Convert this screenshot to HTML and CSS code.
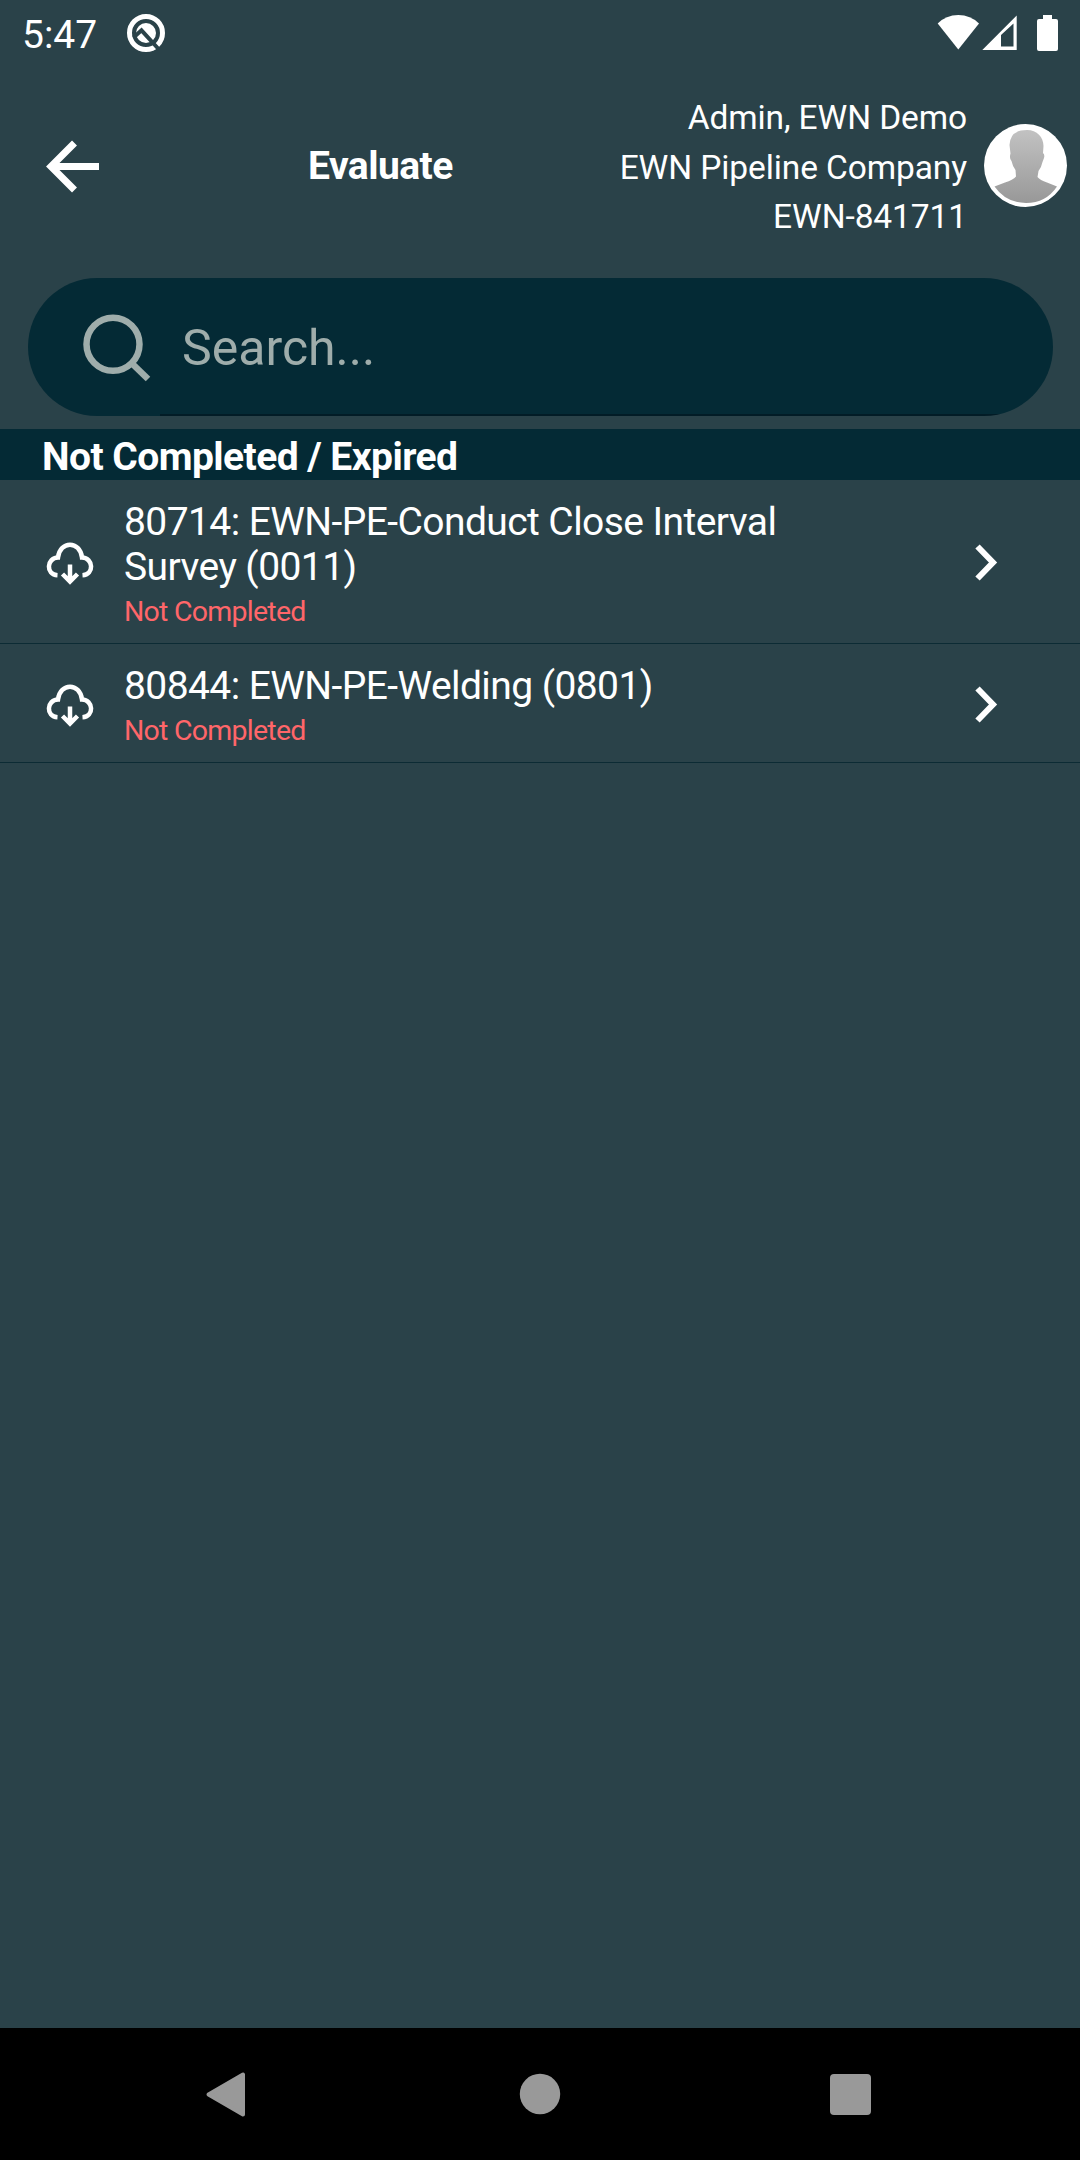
FILE: index.html
```html
<!DOCTYPE html>
<html lang="en">
<head>
  <meta charset="UTF-8">
  <title>Evaluate</title>
  <meta name="viewport" content="width=device-width, initial-scale=1">
  <link rel="stylesheet" href="styles.css">
</head>
<body>

  <div class="status-bar">
    <span class="clock">5:47</span>
    <svg class="status-logo" width="40" height="40" viewBox="0 0 40 40">
      <circle cx="20" cy="20" r="16.5" fill="none" stroke="#fff" stroke-width="5"/>
      <circle cx="20" cy="20" r="10" fill="#fff"/>
      <path d="M7.5 24.5L15.500 17.300L33 36.500" fill="none" stroke="#2a4249" stroke-width="4"/>
    </svg>
    <div class="status-icons">
      <svg width="122" height="40" viewBox="0 0 122 40">
        <path d="M.7 10.5Q9 2 21.300 2T42 10.500L21.300 36.500Z" fill="#fff"/>
        <path d="M45.300 37L79.700 2.500V37ZM64 22V33.500H76.500V10.500Z" fill="#fff" fill-rule="evenodd"/>
        <path d="M106 2h9v4h4q2 0 2 2v28q0 2-2 2h-17q-2 0-2-2V8q0-2 2-2h4z" fill="#fff"/>
      </svg>
    </div>
  </div>

  <header class="header">
    <svg class="back" width="56" height="56" viewBox="0 0 56 56">
      <path d="M29.500 5L6 28.500L29.500 52M7 28.500H54" fill="none" stroke="#fff" stroke-width="7"/>
    </svg>
    <h1>Evaluate</h1>
    <div class="user">
      Admin, EWN Demo<br>
      EWN Pipeline Company<br>
      EWN-841711
    </div>
    <svg class="avatar" width="84" height="84" viewBox="0 0 84 84">
      <defs>
        <linearGradient id="shade" x1="0" y1="0" x2="0" y2="1">
          <stop offset="0" stop-color="#c2c2c2"/>
          <stop offset="1" stop-color="#989898"/>
        </linearGradient>
      </defs>
      <circle cx="41.500" cy="41.500" r="41.500" fill="#fff"/>
      <path d="M43 6C53 6 59.500 13 59.500 22L59 29Q61 30.500 60 34L58.500 38Q57.500 43 54.500 47L53.500 53Q56 56 63 58.500L73 62.500Q62 79 42 79Q22 79 10.500 62.500L21 58.500Q29 56 32 52.500L31.500 46Q28.500 42 27.500 37Q25 34 26.500 29.500L25.500 21Q26 6 43 6Z" fill="url(#shade)"/>
    </svg>
  </header>

  <div class="search">
    <svg width="70" height="70" viewBox="0 0 70 70">
      <circle cx="31" cy="32.300" r="26.500" fill="none" stroke="#9fadab" stroke-width="6.500"/>
      <path d="M50 51.500L66 67" stroke="#9fadab" stroke-width="6.500"/>
    </svg>
    <input type="text" placeholder="Search...">
  </div>

  <h2>Not Completed / Expired</h2>

  <div class="row">
    <svg class="cloud" width="48" height="46" viewBox="0 0 48 46">
      <path d="M11.500 34.200C-.5 33.500 .5 17 12 16.500C14 -.5 34 -.5 36 16.500C47.500 17 48.500 33.500 36.500 34.200" fill="none" stroke="#fff" stroke-width="4.500"/>
      <path d="M24 23.500V40M16.500 33L24 40.500L31.500 33" fill="none" stroke="#fff" stroke-width="4.500"/>
    </svg>
    <div class="info">
      <div class="name">80714: EWN-PE-Conduct Close Interval<br>Survey (0011)</div>
      <div class="state">Not Completed</div>
    </div>
    <svg class="chevron" width="26" height="40" viewBox="0 0 26 40">
      <path d="M4.500 3.500L20 19.500L4.500 35.500" fill="none" stroke="#fff" stroke-width="6"/>
    </svg>
  </div>

  <div class="row">
    <svg class="cloud" width="48" height="46" viewBox="0 0 48 46">
      <path d="M11.500 34.200C-.5 33.500 .5 17 12 16.500C14 -.5 34 -.5 36 16.500C47.500 17 48.500 33.500 36.500 34.200" fill="none" stroke="#fff" stroke-width="4.500"/>
      <path d="M24 23.500V40M16.500 33L24 40.500L31.500 33" fill="none" stroke="#fff" stroke-width="4.500"/>
    </svg>
    <div class="info">
      <div class="name">80844: EWN-PE-Welding (0801)</div>
      <div class="state">Not Completed</div>
    </div>
    <svg class="chevron" width="26" height="40" viewBox="0 0 26 40">
      <path d="M4.500 3.500L20 19.500L4.500 35.500" fill="none" stroke="#fff" stroke-width="6"/>
    </svg>
  </div>

  <nav class="nav-bar">
    <svg width="46" height="46" viewBox="0 0 46 46">
      <path d="M39 3.500V43.500L4.500 23.500Z" fill="#999" stroke="#999" stroke-width="4" stroke-linejoin="round"/>
    </svg>
    <svg width="46" height="46" viewBox="0 0 46 46">
      <circle cx="24" cy="23" r="20.200" fill="#999"/>
    </svg>
    <svg width="46" height="46" viewBox="0 0 46 46">
      <rect x="2" y="3" width="41" height="41" rx="4" fill="#999"/>
    </svg>
  </nav>

</body>
</html>
```

FILE: styles.css
```css
* {
  box-sizing: border-box;
}

body {
  margin: 0;
  height: 2160px;
  display: flex;
  flex-direction: column;
  background: #2a4249;
  color: white;
  font-family: Roboto, sans-serif;
}

svg {
  display: block;
  flex: none;
}

.status-bar {
  height: 66px;
  padding: 0 21px 0 22px;
  display: flex;
  align-items: center;
}

.clock {
  width: 104px;
  padding-top: 3px;
  font-size: 39px;
}

.status-icons {
  margin-left: auto;
}

.header {
  height: 200px;
  padding: 0 12px 0 45px;
  display: flex;
  align-items: center;
}

h1 {
  margin: 0 0 0 207px;
  font-size: 39px;
  letter-spacing: -0.55px;
}

.user {
  margin-left: auto;
  margin-right: 17px;
  padding-top: 3px;
  font-size: 33.5px;
  line-height: 49.5px;
  letter-spacing: -0.1px;
  text-align: right;
}

.search {
  height: 138px;
  margin: 12px 27px 13px 28px;
  padding-left: 54px;
  display: flex;
  align-items: center;
  background: linear-gradient(#021c26, #021c26) 132px 100% / 100% 2px no-repeat #042a35;
  border-radius: 69px;
}

.search input {
  flex: 1;
  height: 100%;
  margin-left: 30px;
  padding: 1px 0 0;
  border: none;
  outline: none;
  background: none;
  color: white;
  font-family: inherit;
  font-size: 50px;
}

.search input::placeholder {
  color: #9fadab;
}

h2 {
  height: 51px;
  margin: 0;
  padding-left: 42px;
  background: #042a35;
  font-size: 39px;
  line-height: 57px;
  letter-spacing: -0.55px;
}

.row {
  padding: 20px 81px 13px 46px;
  display: flex;
  align-items: center;
  border-bottom: 1px solid #0c2b34;
}

.cloud {
  margin-bottom: 2px;
}

.chevron {
  margin-bottom: 4px;
}

.info {
  flex: 1;
  margin-left: 30px;
}

.name {
  font-size: 39px;
  line-height: 45px;
  letter-spacing: -0.58px;
}

.state {
  padding-top: 3px;
  font-size: 28.5px;
  line-height: 37px;
  letter-spacing: -0.75px;
  color: #ff6669;
}

.nav-bar {
  height: 132px;
  margin-top: auto;
  padding: 0 206px 0 204px;
  display: flex;
  align-items: center;
  justify-content: space-between;
  background: black;
}
```
